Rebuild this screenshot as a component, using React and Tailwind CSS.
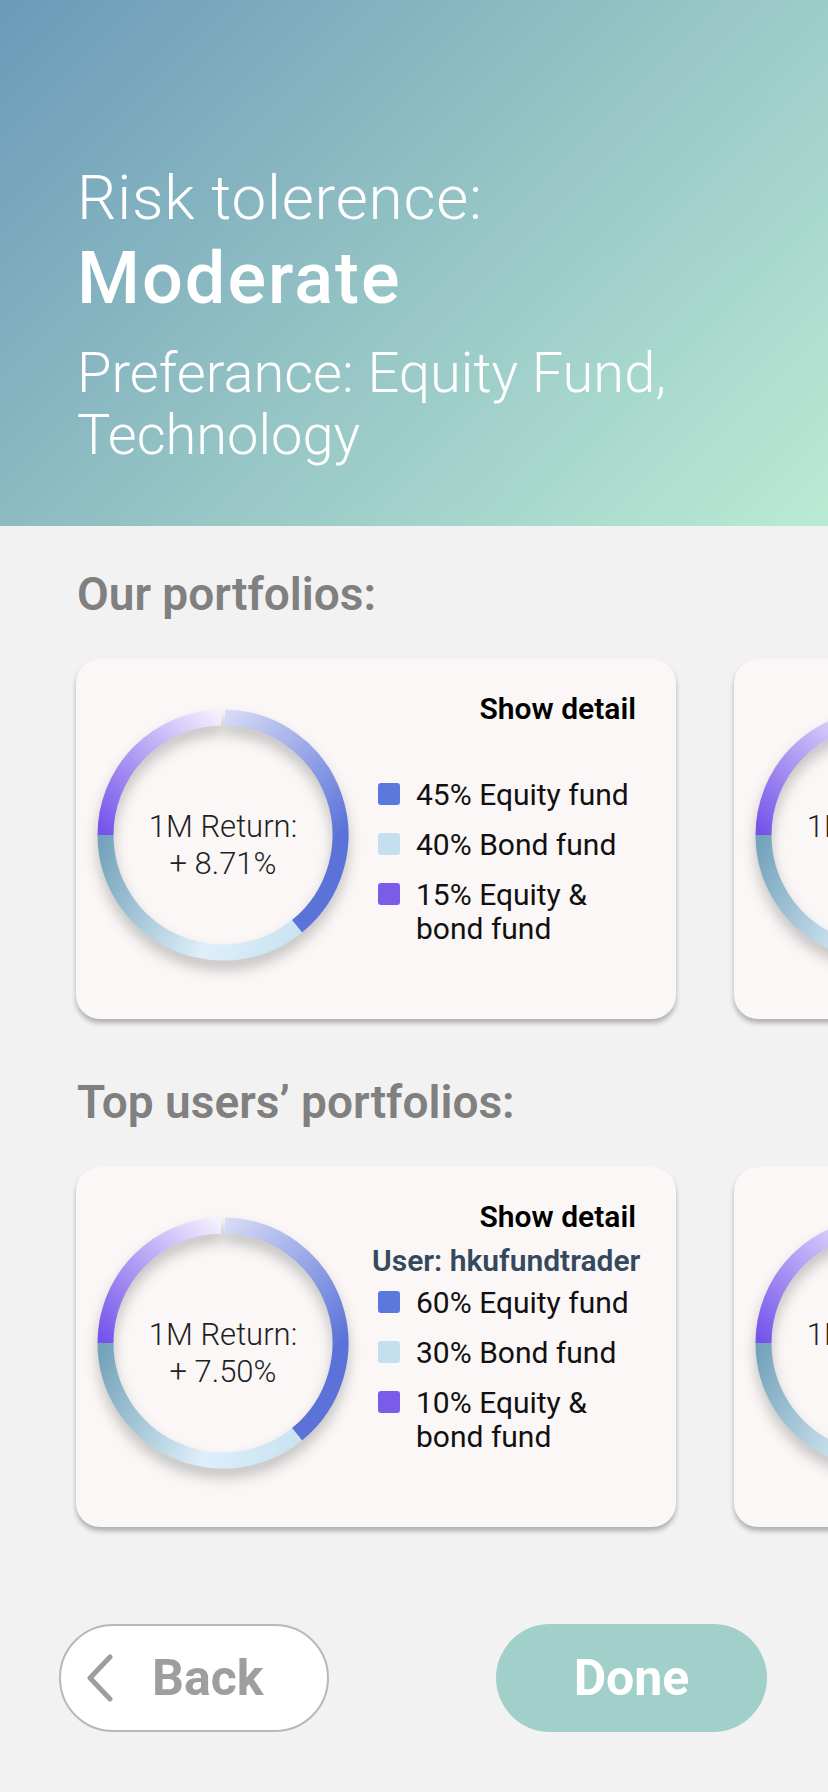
const C = 126;
const R = 117.5;

function pt(deg) {
  const a = (deg * Math.PI) / 180;
  return [C + R * Math.sin(a), C - R * Math.cos(a)];
}

function arc(from, to) {
  const [x1, y1] = pt(from);
  const [x2, y2] = pt(to);
  const large = to - from > 180 ? 1 : 0;
  return `M ${x1} ${y1} A ${R} ${R} 0 ${large} 1 ${x2} ${y2}`;
}

function Donut({ id, value }) {
  return (
    <div className="relative w-[252px] h-[252px] shrink-0">
      <svg width="252" height="252" viewBox="0 0 252 252" className="drop-shadow-[0_9px_7px_rgba(0,0,0,0.22)]">
        <defs>
          <linearGradient id={`${id}-blue`} gradientUnits="userSpaceOnUse" x1="126" y1="8" x2="243" y2="126">
            <stop offset="0" stopColor="#d6dbf7" />
            <stop offset="1" stopColor="#5b73d8" />
          </linearGradient>
          <linearGradient id={`${id}-light`} gradientUnits="userSpaceOnUse" x1="200" y1="217" x2="8" y2="126">
            <stop offset="0" stopColor="#cbe4f1" />
            <stop offset="0.35" stopColor="#deeffa" />
            <stop offset="1" stopColor="#74a3ba" />
          </linearGradient>
          <linearGradient id={`${id}-purple`} gradientUnits="userSpaceOnUse" x1="8" y1="126" x2="126" y2="8">
            <stop offset="0" stopColor="#7453ea" />
            <stop offset="1" stopColor="#f4f1ff" />
          </linearGradient>
        </defs>
        <path d={arc(1, 141)} fill="none" stroke={`url(#${id}-blue)`} strokeWidth="16" />
        <path d={arc(141, 270)} fill="none" stroke={`url(#${id}-light)`} strokeWidth="16" />
        <path d={arc(270, 359)} fill="none" stroke={`url(#${id}-purple)`} strokeWidth="16" />
      </svg>
      <div className="absolute inset-0 flex flex-col items-center justify-center pt-[20px] text-[31px] leading-[37px] font-light text-[#1f1f1f]">
        <span>1M Return:</span>
        <span>{value}</span>
      </div>
    </div>
  );
}

function Legend({ rows }) {
  const colors = ["bg-[#5b78dc]", "bg-[#c4e0ee]", "bg-[#7a5ce9]"];
  return (
    <div className="flex flex-col gap-[16px]">
      {rows.map((r, i) => (
        <div key={i} className="flex items-start gap-[16px]">
          <div className={`w-[22px] h-[22px] mt-[5px] rounded-[3px] shrink-0 ${colors[i]}`} />
          <span className="text-[30px] leading-[34px] text-[#111]">{r}</span>
        </div>
      ))}
    </div>
  );
}

function Card({ id, value, user, rows }) {
  return (
    <div className="w-[600px] h-[360px] shrink-0 rounded-[24px] bg-[#faf7f6] shadow-[0_4px_5px_rgba(0,0,0,0.28)] flex pl-[21px] pr-[40px]">
      <div className="pt-[50px]">
        <Donut id={id} value={value} />
      </div>
      <div className="flex-1 pl-[29px] pt-[33px] flex flex-col">
        <p className="text-right text-[30px] leading-[34px] font-semibold text-black">Show detail</p>
        {user ? (
          <>
            <p className="mt-[10px] text-[30px] leading-[34px] font-semibold text-[#34495e] -ml-[6px] -mr-[12px] whitespace-nowrap">User: {user}</p>
            <div className="mt-[8px]">
              <Legend rows={rows} />
            </div>
          </>
        ) : (
          <div className="mt-[52px]">
            <Legend rows={rows} />
          </div>
        )}
      </div>
    </div>
  );
}

export default function App() {
  const ours = ["45% Equity fund", "40% Bond fund", "15% Equity & bond fund"];
  const tops = ["60% Equity fund", "30% Bond fund", "10% Equity & bond fund"];
  return (
    <div className="w-[828px] h-[1792px] bg-[#f2f2f2] overflow-hidden font-['Roboto',sans-serif]">
      <header className="h-[526px] bg-[linear-gradient(135deg,#6b9ab9_0%,#95c4c5_50%,#b9ebd4_100%)] pl-[77px] pt-[166px] text-white">
        <p className="text-[62px] leading-[64px] font-light tracking-[0.8px]">Risk tolerence:</p>
        <p className="mt-[9px] text-[72px] leading-[80px] font-medium tracking-[2px]">Moderate</p>
        <p className="mt-[23px] text-[56px] leading-[62px] font-light w-[660px]">Preferance: Equity Fund, Technology</p>
      </header>

      <h2 className="mt-[42px] pl-[77px] text-[46px] leading-[52px] font-semibold text-[#808080]">Our portfolios:</h2>
      <div className="mt-[39px] flex gap-[58px] pl-[76px] pb-[10px] overflow-hidden">
        <Card id="o1" value="+ 8.71%" rows={ours} />
        <Card id="o2" value="+ 6.32%" rows={ours} />
      </div>

      <h2 className="mt-[47px] pl-[77px] text-[46px] leading-[52px] font-semibold text-[#808080]">Top users’ portfolios:</h2>
      <div className="mt-[39px] flex gap-[58px] pl-[76px] pb-[10px] overflow-hidden">
        <Card id="t1" value="+ 7.50%" user="hkufundtrader" rows={tops} />
        <Card id="t2" value="+ 7.12%" user="fundmaster" rows={tops} />
      </div>

      <div className="mt-[87px] flex justify-between pl-[59px] pr-[61px]">
        <button className="w-[270px] h-[108px] rounded-full border-2 border-[#b8b8b8] bg-white flex items-center pl-[24px]">
          <svg width="30" height="48" viewBox="0 0 30 48">
            <polyline points="25,3 5,24 25,45" fill="none" stroke="#9e9e9e" strokeWidth="5" strokeLinecap="round" strokeLinejoin="round" />
          </svg>
          <span className="ml-[37px] text-[50px] font-bold text-[#9e9e9e]">Back</span>
        </button>
        <button className="w-[271px] h-[108px] rounded-full bg-[#a0d0c9] flex items-center justify-center">
          <span className="text-[50px] font-bold text-white">Done</span>
        </button>
      </div>
    </div>
  );
}
